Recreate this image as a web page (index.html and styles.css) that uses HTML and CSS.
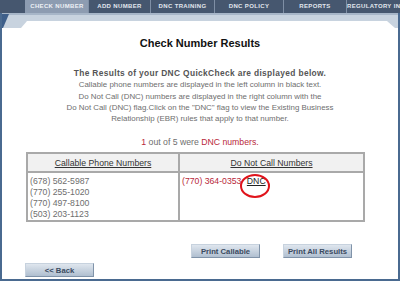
FILE: index.html
```html
<!DOCTYPE html>
<html lang="en">
<head>
    <meta charset="UTF-8">
    <meta name="viewport" content="width=device-width, initial-scale=1.0">
    <title>Check Number Results</title>
    <link rel="stylesheet" href="styles.css">
</head>
<body>
    <nav class="tabs">
        <span class="tab-spacer"></span>
        <a class="tab active">CHECK NUMBER</a>
        <a class="tab">ADD NUMBER</a>
        <a class="tab">DNC TRAINING</a>
        <a class="tab">DNC POLICY</a>
        <a class="tab">REPORTS</a>
        <a class="tab">REGULATORY INFO</a>
    </nav>

    <div class="frame">
        <svg class="band" width="396" height="15" viewBox="0 0 396 15">
            <rect x="0" y="0" width="396" height="15" fill="#c8d3df"/>
            <rect x="0" y="0" width="396" height="2" fill="#a7b6c8"/>
            <polygon points="0,1 7,1 1,15 0,15" fill="#3e5f8a"/>
            <polygon points="25,8 385,8 393,15 19,15" fill="#ffffff"/>
        </svg>

        <div class="content">
            <h1>Check Number Results</h1>

            <div class="intro">
                <p class="lead">The Results of your DNC QuickCheck are displayed below.</p>
                <p>Callable phone numbers are displayed in the left column in black text.</p>
                <p>Do Not Call (DNC) numbers are displayed in the right column with the</p>
                <p>Do Not Call (DNC) flag.Click on the "DNC" flag to view the Existing Business</p>
                <p>Relationship (EBR) rules that apply to that number.</p>
            </div>

            <p class="summary"><span class="red">1</span> out of 5 were <span class="red">DNC numbers.</span></p>

            <table class="results">
                <tr class="head">
                    <th class="col-callable"><u>Callable Phone Numbers</u></th>
                    <th class="col-dnc"><u>Do Not Call Numbers</u></th>
                </tr>
                <tr class="body">
                    <td class="callable">
                        (678) 562-5987<br>
                        (770) 255-1020<br>
                        (770) 497-8100<br>
                        (503) 203-1123
                    </td>
                    <td class="dnc">
                        <span class="red">(770) 364-0353</span>
                        <a class="flag">DNC</a>
                    </td>
                </tr>
            </table>

            <div class="actions">
                <button type="button">Print Callable</button>
                <button type="button">Print All Results</button>
            </div>
            <div class="back">
                <button type="button">&lt;&lt; Back</button>
            </div>
        </div>
    </div>
</body>
</html>
```

FILE: styles.css
```css
body {
    margin: 0;
    width: 400px;
    height: 281px;
    overflow: hidden;
    font-family: "Liberation Sans", Arial, sans-serif;
    background-color: #fff;
}
.tabs {
    display: grid;
    grid-template-columns: 25px 63px 62px 64px 69px 63px 1fr;
    height: 13px;
    background-color: #46576f;
    overflow: hidden;
}
.tab {
    border-left: 1px solid #7f8fa5;
    color: #e2e7ee;
    font-size: 6px;
    font-weight: bold;
    letter-spacing: 0.35px;
    line-height: 13px;
    text-align: center;
    white-space: nowrap;
    overflow: hidden;
}
.tab.active {
    background-color: #8d9cb1;
    border-left-color: #8d9cb1;
    color: #eef1f5;
}
.frame {
    box-sizing: border-box;
    height: 268px;
    border-left: 2px solid #4a6a90;
    border-right: 2px solid #4a6a90;
    border-bottom: 2px solid #4a6a90;
}
.band {
    display: block;
}
.content {
    color: #6e6e6e;
}
h1 {
    margin: 8px 0 0;
    font-size: 11px;
    line-height: 14px;
    text-align: center;
    color: #111;
}
.intro {
    margin-top: 18px;
    text-align: center;
}
.intro p {
    margin: 0;
    font-size: 7.9px;
    line-height: 11.25px;
}
.intro p.lead {
    font-size: 8.4px;
    font-weight: bold;
    letter-spacing: 0.35px;
    color: #555;
}
.summary {
    margin: 12px 0 0;
    font-size: 8.7px;
    line-height: 12px;
    text-align: center;
}
.red {
    color: #b8283a;
}
.results {
    margin: 4px 0 0 24px;
    width: 339px;
    border-collapse: collapse;
    font-size: 8.7px;
}
.results th,
.results td {
    box-sizing: border-box;
    border: 2px solid #a9a9a9;
    padding: 0;
}
.results .head th {
    height: 19px;
    background-color: #f1f1f1;
    color: #333;
    font-weight: normal;
}
.col-callable {
    width: 152px;
}
.results .body td {
    height: 49px;
    vertical-align: top;
    line-height: 11px;
    padding: 3px 2px 0;
}
.callable {
    color: #6e6e6e;
}
.dnc {
    white-space: nowrap;
}
.flag {
    position: relative;
    margin-left: 3px;
    color: #222;
    text-decoration: underline;
}
.flag::after {
    content: "";
    position: absolute;
    left: -7px;
    top: -2px;
    width: 26px;
    height: 20px;
    border: 2px solid #e0141c;
    border-radius: 50%;
}
button {
    display: block;
    box-sizing: border-box;
    width: 69px;
    height: 14px;
    padding: 0;
    border: 1px solid #8093a9;
    border-top-color: #c7d2de;
    border-left-color: #c7d2de;
    background: linear-gradient(#dfe6ee, #b0bfd0);
    color: #3a4a60;
    font-family: "Liberation Sans", Arial, sans-serif;
    font-size: 7.7px;
    font-weight: bold;
    cursor: pointer;
}
.actions {
    display: flex;
    gap: 23px;
    margin: 22px 0 0 189px;
}
.back {
    display: flex;
    margin: 5px 0 0 23px;
}
```
